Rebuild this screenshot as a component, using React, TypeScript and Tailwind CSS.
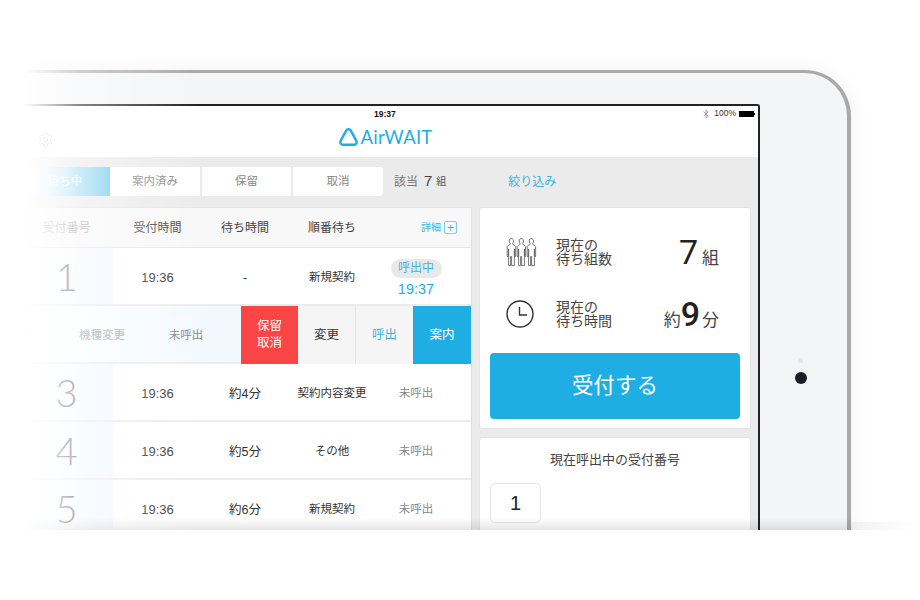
import { Bluetooth, Settings } from 'lucide-react';

const rows = [
  { no: '1', wait: '-', kind: '新規契約', called: true },
  { no: '3', wait: '約4分', kind: '契約内容変更' },
  { no: '4', wait: '約5分', kind: 'その他' },
  { no: '5', wait: '約6分', kind: '新規契約' },
];

function Row({ row }: { row: (typeof rows)[number] }) {
  return (
    <div className="flex h-[58px] shrink-0 items-center border-b-2 border-[#ececec] bg-white text-[11.5px] text-[#333]">
      <div className="flex h-full w-[113px] items-center justify-center bg-linear-to-r from-white to-[#f2f8fe] pl-[20px] font-['Lato',sans-serif] text-[38px] font-light text-[#6a6a6a]">
        {row.no}
      </div>
      <div className="flex h-full flex-1 items-center pt-[4px]">
        <div className="w-[89px] text-center text-[13px]">19:36</div>
        <div className="w-[86px] text-center text-[12.5px]">{row.wait}</div>
        <div className="w-[88px] text-center">{row.kind}</div>
        {row.called ? (
          <div className="flex w-[80px] flex-col items-center">
            <span className="flex h-[19px] w-[51px] items-center justify-center rounded-full bg-[#e9e9e9] text-[12px] text-[#45b4e2]">呼出中</span>
            <span className="mt-[2px] text-[14.5px] leading-[18px] text-[#1eaee3]">19:37</span>
          </div>
        ) : (
          <div className="w-[80px] text-center text-[#888]">未呼出</div>
        )}
      </div>
    </div>
  );
}

function SwipedRow() {
  return (
    <div className="flex h-[58px] shrink-0 text-[11.5px]">
      <div className="flex w-[241px] items-center border-b-2 border-[#ececec] bg-linear-to-r from-white to-[#f0f8fe] pt-[4px] text-[#888]">
        <span className="w-[54px] text-center text-[#ddd]">分</span>
        <span className="w-[96px] text-center text-[#a0a0a0]">機種変更</span>
        <span className="w-[72px] text-center">未呼出</span>
      </div>
      <button className="flex w-[57px] items-center justify-center bg-[#f94545] text-[12.5px] leading-[17px] text-white">
        保留
        <br />
        取消
      </button>
      <button className="w-[58px] border-r border-[#e6e6e6] bg-[#f5f5f5] text-[12.5px] text-[#333]">変更</button>
      <button className="w-[57px] bg-[#f5f5f5] text-[12.5px] text-[#3db2e2]">呼出</button>
      <button className="flex-1 bg-[#1eaee3] text-[12.5px] text-white">案内</button>
    </div>
  );
}

function PeopleIcon() {
  const figure = 'M5 1a2.6 2.6 0 0 1 2.4 3.6c-.3.8-.8 1.3-.8 2 0 .8 2.6 1 3 2.4V19h-1.2v-7.5V28H5.6v-9h-1v9H2.6V11.5V19H1.2V9c.4-1.4 3-1.6 3-2.4 0-.7-.5-1.2-.8-2A2.6 2.6 0 0 1 5 1z';
  return (
    <svg width="31" height="30" viewBox="0 0 31 30" fill="white" stroke="#666" strokeWidth="0.9" strokeLinejoin="round">
      <path d={figure} transform="translate(0 0.5)" />
      <path d={figure} transform="translate(20 0.5)" />
      <path d={figure} transform="translate(10 0.5)" />
    </svg>
  );
}

function ClockIcon() {
  return (
    <svg width="28" height="28" viewBox="0 0 28 28" fill="none" stroke="#333" strokeWidth="1.4">
      <circle cx="14" cy="14" r="13" />
      <path d="M13.5 7v8H21" />
    </svg>
  );
}

function Stat({ icon, line, value }: { icon: React.ReactNode; line: string; value: React.ReactNode }) {
  return (
    <div className="flex h-[62px] items-center text-[#444]">
      <div className="w-[66px] pl-[16px]">{icon}</div>
      <div className="text-[14px] leading-[14.5px]">
        現在の
        <br />
        {line}
      </div>
      <div className="ml-auto flex items-baseline text-[17px]">{value}</div>
    </div>
  );
}

export default function App() {
  return (
    <div className="relative h-[600px] w-[920px] overflow-hidden bg-white font-['Liberation_Sans','Noto_Sans_CJK_JP',sans-serif]">
      <div className="h-[530px] overflow-hidden pt-[70px]">
        <div className="h-[600px] w-[851px] rounded-tr-[46px] border-t-[3px] border-r-[4px] border-[#a9a9a9] bg-[#f4f5f7] pt-[31px] shadow-[0_0_20px_rgba(0,0,0,0.06)]">
          <div className="flex h-[500px] w-[760px] flex-col rounded-tr-[3px] border-t-2 border-r-2 border-[#222] bg-[#ebebeb]">
            {/* status bar + logo */}
            <div className="relative h-[51px] shrink-0 bg-white">
              <div className="flex h-[15px] items-center justify-end pr-[3px] text-[8.5px] text-[#333]">
                <Bluetooth size={10} strokeWidth={1.5} className="mr-[3px] text-[#777]" />
                <span className="mr-[3px]">100%</span>
                <span className="h-[6px] w-[15px] bg-black" />
                <span className="h-[2px] w-[1px] bg-black" />
              </div>
              <span className="absolute top-[2px] left-[374px] text-[8.5px] font-bold text-[#111]">19:37</span>
              <Settings size={17} strokeWidth={1.2} className="absolute top-[25px] left-[37px] text-[#999]" />
              <div className="flex items-center justify-center pt-[5px] pl-[12px]">
                <svg width="21" height="20" viewBox="0 0 21 20" fill="none" stroke="#1eaee3" strokeWidth="2.4" strokeLinejoin="round">
                  <path d="M8.2 3.6a2.6 2.6 0 0 1 4.6 0l5.6 10.2a2.6 2.6 0 0 1-2.3 3.9H4.9a2.6 2.6 0 0 1-2.3-3.9z" />
                </svg>
                <span className="ml-[2px] font-['Lato',sans-serif] text-[18.5px] leading-[22px] tracking-[0.2px] text-[#1eaee3]">AirWAIT</span>
              </div>
            </div>

            {/* tabs */}
            <div className="flex h-[50px] shrink-0 items-center pb-[1px] pl-[20px] text-[11.5px]">
              <div className="flex h-[29px] w-[90px] items-center justify-center bg-linear-to-r from-white to-[#6fcaee] text-white">待ち中</div>
              <div className="flex h-[29px] w-[90px] items-center justify-center bg-white text-[#888]">案内済み</div>
              <div className="ml-[2px] flex h-[29px] w-[89px] items-center justify-center bg-white text-[#888]">保留</div>
              <div className="ml-[2px] flex h-[29px] w-[90px] items-center justify-center rounded-r-[3px] bg-white text-[#888]">取消</div>
              <span className="ml-[11px] text-[12px] text-[#777]">該当</span>
              <span className="ml-[6px] text-[15px] text-[#444]">7</span>
              <span className="ml-[4px] text-[10px] text-[#555]">組</span>
              <span className="ml-[62px] text-[12px] text-[#3db2e2]">絞り込み</span>
            </div>

            <div className="flex min-h-0 flex-1">
              {/* waiting list */}
              <div className="flex w-[472px] shrink-0 flex-col border-r border-[#dedede]">
                <div className="flex h-[41px] shrink-0 items-center border-y border-[#e6e6e6] bg-[#f8f8f8] text-[12px] text-[#444]">
                  <span className="w-[113px] pl-[20px] text-center text-[#aaa]">受付番号</span>
                  <span className="w-[89px] text-center">受付時間</span>
                  <span className="w-[86px] text-center">待ち時間</span>
                  <span className="w-[88px] text-center">順番待ち</span>
                  <span className="ml-[45px] text-[10px] text-[#3db2e2]">詳細</span>
                  <span className="ml-[3px] flex h-[13px] w-[13px] items-center justify-center rounded-[2px] border border-[#7fcbe9] text-[12px] leading-none text-[#3db2e2]">+</span>
                </div>
                <Row row={rows[0]} />
                <SwipedRow />
                <Row row={rows[1]} />
                <Row row={rows[2]} />
                <Row row={rows[3]} />
              </div>

              {/* summary panel */}
              <div className="flex flex-1 flex-col gap-[8px] px-[7px]">
                <div className="h-[222px] shrink-0 rounded-[3px] border border-[#e4e4e4] bg-white px-[10px] pt-[13px]">
                  <Stat
                    icon={<PeopleIcon />}
                    line="待ち組数"
                    value={
                      <>
                        <span className="font-['Roboto',sans-serif] text-[34px] leading-[40px] text-[#222]">7</span>
                        <span className="mr-[21px] ml-[4px]">組</span>
                      </>
                    }
                  />
                  <Stat
                    icon={<ClockIcon />}
                    line="待ち時間"
                    value={
                      <>
                        <span>約</span>
                        <span className="font-['Roboto',sans-serif] text-[34px] leading-[40px] font-medium text-[#222]">9</span>
                        <span className="mr-[21px] ml-[2px]">分</span>
                      </>
                    }
                  />
                  <button className="mt-[8px] h-[66px] w-full rounded-[4px] bg-[#1eaee3] text-[21.5px] text-white">受付する</button>
                </div>
                <div className="flex-1 rounded-t-[3px] border border-[#e4e4e4] bg-white px-[10px] pt-[12px]">
                  <p className="text-center text-[13px] text-[#444]">現在呼出中の受付番号</p>
                  <div className="mt-[13px] flex h-[40px] w-[51px] items-center justify-center rounded-[5px] border border-[#e4e4e4] text-[20px] text-[#222]">1</div>
                </div>
              </div>
            </div>
          </div>
        </div>
      </div>

      {/* things lying over the device: camera, bottom shade, left fade */}
      <span className="absolute top-[358px] left-[798px] h-[5px] w-[5px] rounded-full bg-[#e3e3e3]" />
      <span className="absolute top-[372px] left-[795px] h-[12px] w-[12px] rounded-full bg-[#1c1c22]" />
      <div className="pointer-events-none absolute top-[518px] left-0 h-[12px] w-[852px] bg-linear-to-b from-black/0 to-black/10" />
      <div className="pointer-events-none absolute top-[522px] left-[852px] h-[8px] w-[62px] bg-linear-to-r from-black/5 to-black/0" />
      <div className="pointer-events-none absolute top-0 left-0 h-[530px] w-[200px] bg-linear-to-r from-white from-[12%] via-white/45 via-[40%] to-white/0" />
    </div>
  );
}
